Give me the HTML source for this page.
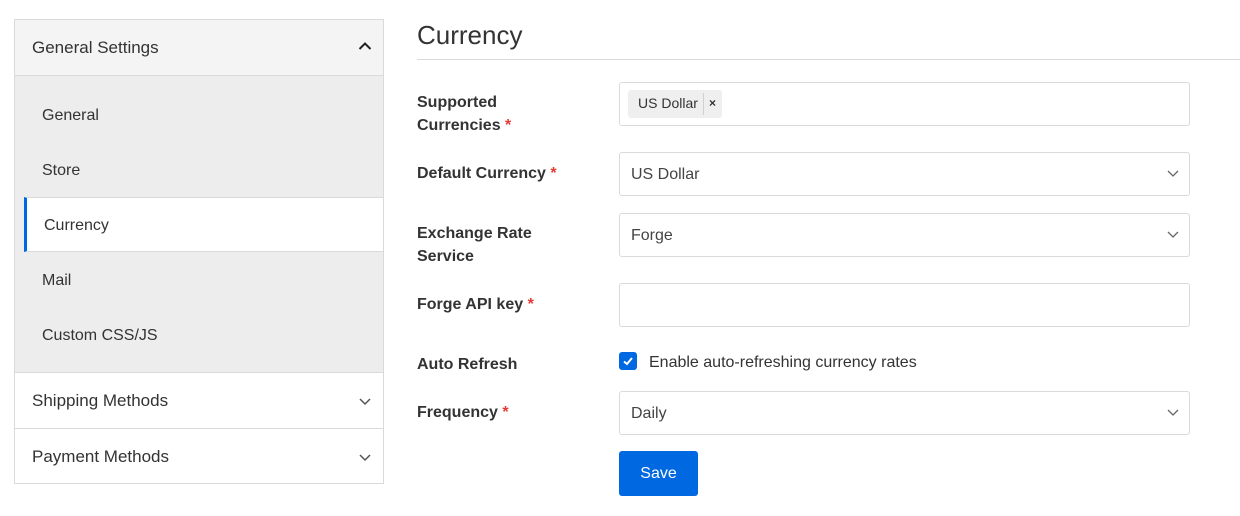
<!DOCTYPE html>
<html><head><meta charset="utf-8"><style>
*{box-sizing:border-box;margin:0;padding:0}
body{width:1240px;height:516px;background:#fff;font-family:"Liberation Sans",sans-serif;color:#333;position:relative;overflow:hidden}
.a{position:absolute}
.side{left:14px;top:19px;width:370px;height:465px;border:1px solid #d9d9de;background:#fff}
.hd{position:absolute;left:0;width:368px;height:56px;font-size:17px;color:#333;padding-left:17px;line-height:56px;border-bottom:1px solid #d9d9de}
.it{position:absolute;left:0;width:368px;height:55px;line-height:57px;padding-left:27px;font-size:16px;color:#333}
.lbl{position:absolute;left:417px;font-size:16px;font-weight:bold;color:#333;line-height:23px}
.req{color:#e53935}
.inp{position:absolute;left:619px;width:571px;height:44px;border:1px solid #d9d9de;border-radius:3px;background:#fff;font-size:16px;line-height:43px;padding-left:11px;color:#444}
.chev{position:absolute;right:9px;top:15px}
</style></head><body>
<div class="a side">
 <div class="hd" style="top:0;background:#f4f4f4">General Settings
  <svg class="a" style="right:10px;top:21px" width="16" height="11" viewBox="0 0 16 11"><path d="M2.5 8 L8 2.5 L13.5 8" fill="none" stroke="#222" stroke-width="2"/></svg></div>
 <div class="a" style="top:56px;left:0;width:368px;height:297px;background:#ededed;border-bottom:1px solid #d9d9de">
  <div class="it" style="top:11px">General</div>
  <div class="it" style="top:66px">Store</div>
  <div class="it" style="top:121px;left:9px;width:359px;background:#fff;border-top:1px solid #d9d9de;border-bottom:1px solid #d9d9de;border-left:3px solid #0068e1;padding-left:17px;line-height:55px">Currency</div>
  <div class="it" style="top:176px">Mail</div>
  <div class="it" style="top:231px">Custom CSS/JS</div>
 </div>
 <div class="hd" style="top:353px">Shipping Methods
  <svg class="a" style="right:11px;top:23px" width="14" height="10" viewBox="0 0 14 10"><path d="M2 3 L7 8 L12 3" fill="none" stroke="#555" stroke-width="1.5"/></svg></div>
 <div class="hd" style="top:409px;border-bottom:none">Payment Methods
  <svg class="a" style="right:11px;top:23px" width="14" height="10" viewBox="0 0 14 10"><path d="M2 3 L7 8 L12 3" fill="none" stroke="#555" stroke-width="1.5"/></svg></div>
</div>

<div class="a" style="left:417px;top:20px;font-size:26px;color:#333">Currency</div>
<div class="a" style="left:417px;top:59px;width:823px;height:1px;background:#d9d9de"></div>

<div class="lbl" style="top:91px">Supported<br>Currencies <span class="req">*</span></div>
<div class="inp" style="top:82px;height:44px">
 <div class="a" style="left:8px;top:7px;width:94px;height:28px;background:#efefef;border-radius:3px;font-size:14px;line-height:27px;padding-left:10px;color:#333">US Dollar<span class="a" style="left:75px;top:3px;width:1px;height:22px;background:#d0d0d0"></span><span class="a" style="left:81px;top:0;font-weight:bold;font-size:12px">×</span></div>
</div>

<div class="lbl" style="top:162px">Default Currency <span class="req">*</span></div>
<div class="inp" style="top:152px">US Dollar<svg class="chev" width="14" height="10" viewBox="0 0 14 10"><path d="M2 3 L7 8 L12 3" fill="none" stroke="#666" stroke-width="1.3"/></svg></div>

<div class="lbl" style="top:222px">Exchange Rate<br>Service</div>
<div class="inp" style="top:213px">Forge<svg class="chev" width="14" height="10" viewBox="0 0 14 10"><path d="M2 3 L7 8 L12 3" fill="none" stroke="#666" stroke-width="1.3"/></svg></div>

<div class="lbl" style="top:293px">Forge API key <span class="req">*</span></div>
<div class="inp" style="top:283px"></div>

<div class="lbl" style="top:353px">Auto Refresh</div>
<div class="a" style="left:619px;top:352px;width:18px;height:18px;background:#0068e1;border-radius:3px"><svg width="18" height="18" viewBox="0 0 18 18"><path d="M5 9.5 L8 12 L13 6" fill="none" stroke="#fff" stroke-width="2"/></svg></div>
<div class="a" style="left:649px;top:353px;font-size:16px;line-height:20px;color:#333">Enable auto-refreshing currency rates</div>

<div class="lbl" style="top:401px">Frequency <span class="req">*</span></div>
<div class="inp" style="top:391px">Daily<svg class="chev" width="14" height="10" viewBox="0 0 14 10"><path d="M2 3 L7 8 L12 3" fill="none" stroke="#666" stroke-width="1.3"/></svg></div>

<div class="a" style="left:619px;top:451px;width:79px;height:45px;background:#0068e1;border-radius:3px;color:#fff;font-size:16px;line-height:45px;text-align:center">Save</div>
</body></html>
